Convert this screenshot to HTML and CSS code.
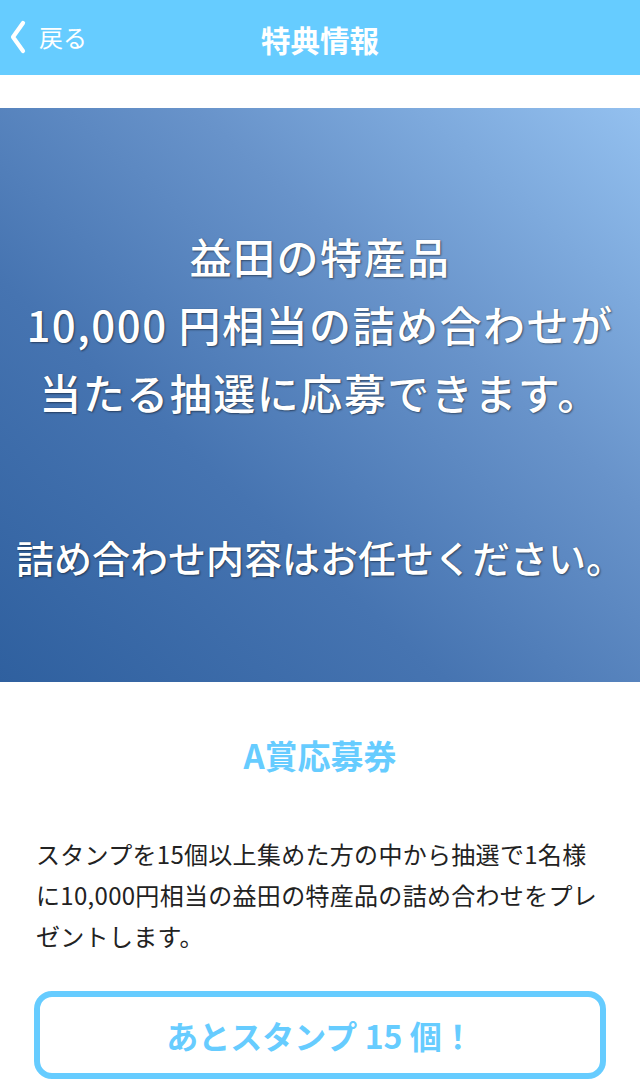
FILE: index.html
```html
<!DOCTYPE html>
<html lang="ja">
<head>
<meta charset="utf-8">
<title>特典情報</title>
<link rel="stylesheet" href="styles.css">
</head>
<body>
<header class="topbar">
  <a class="back" href="#">
    <svg class="chev" width="18" height="34" viewBox="0 0 18 34"><polyline points="14,3 4,17 14,31" fill="none" stroke="#fff" stroke-width="4.2" stroke-linecap="round" stroke-linejoin="round"/></svg>
    <span class="back-label">戻る</span>
  </a>
  <h1 class="title">特典情報</h1>
</header>
<main class="content">
  <section class="banner">
    <p class="banner-main">益田の特産品<br>10,000 円相当の詰め合わせが<br>当たる抽選に応募できます。</p>
    <p class="banner-sub">詰め合わせ内容はお任せください。</p>
  </section>
  <h2 class="prize">A賞応募券</h2>
  <p class="desc">スタンプを15個以上集めた方の中から抽選で1名様に10,000円相当の益田の特産品の詰め合わせをプレゼントします。</p>
  <div class="remain">あとスタンプ 15 個！</div>
</main>
</body>
</html>
```
FILE: styles.css
```css
* { box-sizing: border-box; }
html, body {
  margin: 0;
  padding: 0;
  background: #fff;
  font-family: "Noto Sans CJK JP", "Noto Sans", sans-serif;
}
.topbar {
  height: 75px;
  background: #66ccff;
  display: flex;
  align-items: center;
  justify-content: center;
  position: relative;
}
.back {
  position: absolute;
  left: 9px;
  top: 20px;
  display: flex;
  align-items: center;
  gap: 12px;
  color: #fff;
  text-decoration: none;
}
.back-label {
  font-size: 24px;
  line-height: 34px;
}
.title {
  margin: 0;
  color: #fff;
  font-size: 29.5px;
  font-weight: 700;
  line-height: 40px;
  padding-top: 2px;
}
.content {
  padding-top: 33px;
}
.banner {
  height: 574px;
  background: linear-gradient(to top right, #2f609f 0%, #4674b1 35%, #6893ca 65%, #93c0ef 100%);
  color: #fff;
  text-align: center;
  padding-top: 114px;
  text-shadow: 1px 1px 2px rgba(0, 0, 0, 0.45), 0 0 1px rgba(0, 0, 0, 0.3);
}
.banner-main {
  margin: 0;
  font-size: 42px;
  letter-spacing: 1.5px;
  line-height: 68px;
  font-weight: 500;
}
.banner-sub {
  margin: 97px 0 0;
  font-size: 38px;
  line-height: 68px;
  font-weight: 500;
}
.prize {
  margin: 53px 0 0;
  text-align: center;
  color: #66ccff;
  font-size: 33px;
  line-height: 40px;
  font-weight: 700;
}
.desc {
  margin: 58px 0 0;
  padding: 0 34px 0 36px;
  font-size: 24px;
  letter-spacing: 0.3px;
  line-height: 41px;
  color: #222;
}
.remain {
  margin: 35px 34px 0;
  height: 88px;
  border: 6px solid #66ccff;
  border-radius: 18px;
  display: flex;
  align-items: center;
  justify-content: center;
  color: #66ccff;
  font-size: 32px;
  font-weight: 700;
}
```
